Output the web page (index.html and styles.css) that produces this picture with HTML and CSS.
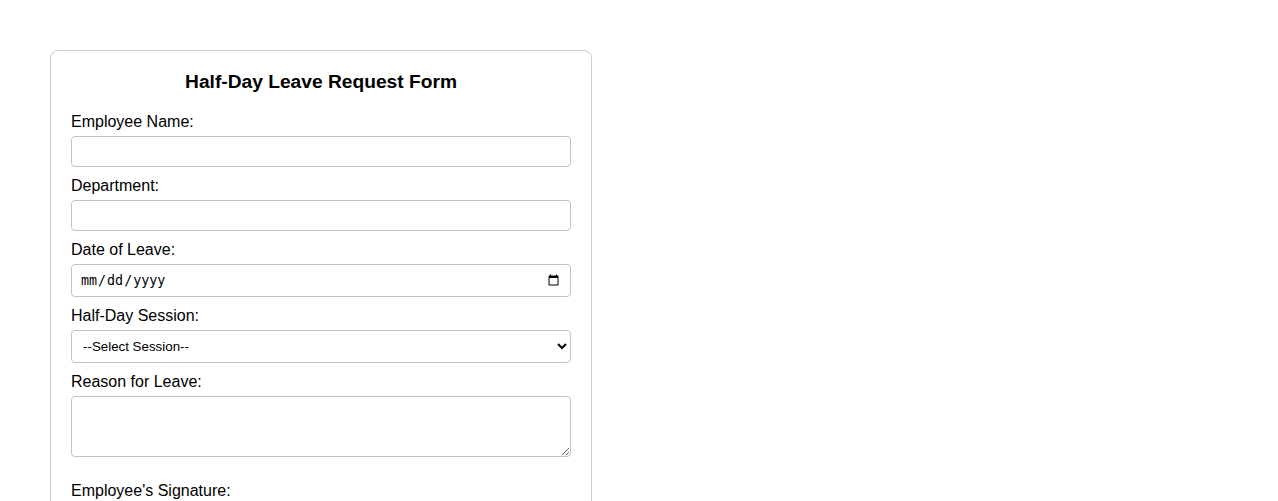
FILE: index.html
```html
<!DOCTYPE html>
<html lang="en">
<head>
    <meta charset="UTF-8">
    <meta name="viewport" content="width=device-width, initial-scale=1.0">
    <title>Half-Day Leave Request Form</title>
    <link rel="stylesheet" href="styles.css">
</head>
<body>
    <div class="form-container">
        <h2>Half-Day Leave Request Form</h2>
        <form>
            <label for="name">Employee Name:</label>
            <input type="text" id="name" name="name">

            <label for="department">Department:</label>
            <input type="text" id="department" name="department">

            <label for="date">Date of Leave:</label>
            <input type="date" id="date" name="date" class="date-field">

            <label for="session">Half-Day Session:</label>
            <select id="session" name="session">
                <option value="">--Select Session--</option>
                <option value="morning">Morning</option>
                <option value="afternoon">Afternoon</option>
            </select>

            <label for="reason">Reason for Leave:</label>
            <textarea id="reason" name="reason"></textarea>

            <label for="signature">Employee's Signature:</label>
            <input type="text" id="signature" name="signature">

            <button type="submit" class="submit-btn">Submit Request</button>
        </form>
    </div>
</body>
</html>
```

FILE: styles.css
```css
body {
    margin: 50px;
    font-family: 'Liberation Sans', Arial, sans-serif;
    background: white;
    color: black;
}

.form-container {
    width: 500px;
    padding: 20px;
    border: 1px solid #ccc;
    border-radius: 8px;
}

h2 {
    margin: 0 0 20px;
    font-size: 19.2px;
    line-height: 21px;
    text-align: center;
}

label {
    display: block;
    font-size: 16px;
    line-height: 18px;
    padding-top: 1px;
    margin-bottom: 5px;
}

input,
select,
textarea {
    display: block;
    width: 100%;
    height: 31px;
    padding: 0 8px;
    margin: 0 0 9px;
    border: 1px solid #c4c4c4;
    border-radius: 4px;
    box-sizing: border-box;
    background: white;
}

.date-field,
select {
    height: 33px;
}

select {
    font-family: 'Liberation Sans', Arial, sans-serif;
    font-size: 13.33px;
    padding: 0 7px;
}

textarea {
    height: 61px;
    padding: 8px;
    margin-bottom: 24px;
}

.submit-btn {
    margin-top: 10px;
    padding: 10px 20px;
    background-color: #4caf50;
    color: white;
    border: none;
    border-radius: 4px;
    font-size: 16px;
    cursor: pointer;
}
```
